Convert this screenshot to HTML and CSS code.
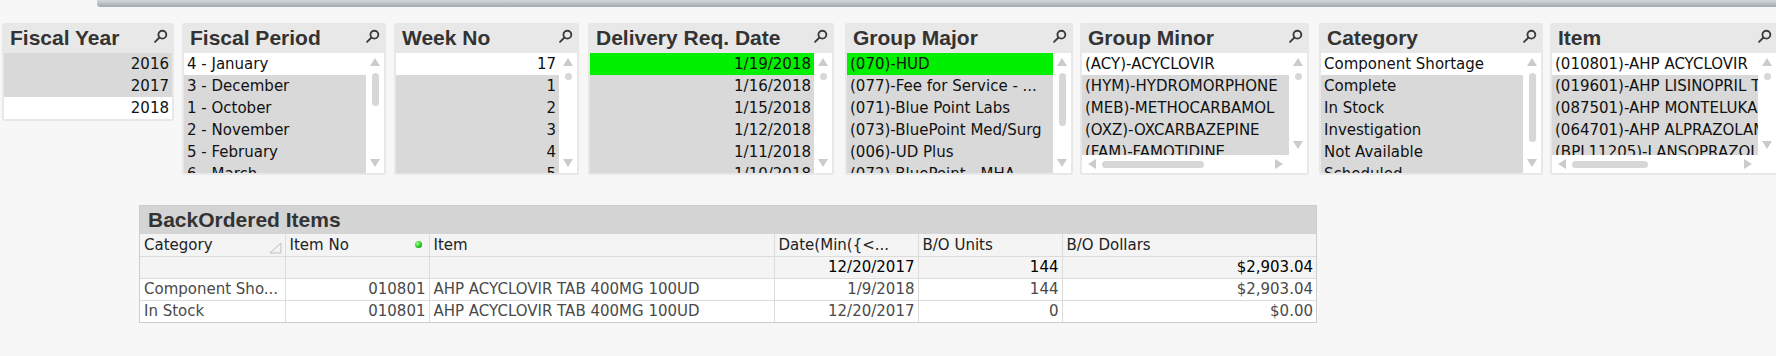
FILE: index.html
```html
<!DOCTYPE html>
<html lang="en">
<head>
    <meta charset="UTF-8">
    <title>BackOrdered Items</title>
    <link rel="stylesheet" href="styles.css">
</head>
<body>
    <div class="tabs"></div>

    <div class="filters">
        <div class="lb lb-year">
            <div class="lb-head">
                <span class="lb-title">Fiscal Year</span>
                <svg class="lb-search" viewBox="0 0 16 16"><circle cx="10" cy="6" r="4.2"/><line x1="6.9" y1="9.1" x2="2.2" y2="13.8"/></svg>
            </div>
            <div class="lb-body">
                <div class="lb-rows num">
                    <div class="row x">2016</div>
                    <div class="row x">2017</div>
                    <div class="row">2018</div>
                </div>
            </div>
        </div>

        <div class="lb lb-period">
            <div class="lb-head">
                <span class="lb-title">Fiscal Period</span>
                <svg class="lb-search" viewBox="0 0 16 16"><circle cx="10" cy="6" r="4.2"/><line x1="6.9" y1="9.1" x2="2.2" y2="13.8"/></svg>
            </div>
            <div class="lb-body">
                <div class="lb-rows">
                    <div class="row">4 - January</div>
                    <div class="row x">3 - December</div>
                    <div class="row x">1 - October</div>
                    <div class="row x">2 - November</div>
                    <div class="row x">5 - February</div>
                    <div class="row x">6 - March</div>
                </div>
                <div class="vscroll">
                    <span class="arr up"></span>
                    <span class="thumb" style="height:33px"></span>
                    <span class="arr down"></span>
                </div>
            </div>
        </div>

        <div class="lb lb-week">
            <div class="lb-head">
                <span class="lb-title">Week No</span>
                <svg class="lb-search" viewBox="0 0 16 16"><circle cx="10" cy="6" r="4.2"/><line x1="6.9" y1="9.1" x2="2.2" y2="13.8"/></svg>
            </div>
            <div class="lb-body">
                <div class="lb-rows num">
                    <div class="row">17</div>
                    <div class="row x">1</div>
                    <div class="row x">2</div>
                    <div class="row x">3</div>
                    <div class="row x">4</div>
                    <div class="row x">5</div>
                </div>
                <div class="vscroll">
                    <span class="arr up"></span>
                    <span class="dot"></span>
                    <span class="arr down"></span>
                </div>
            </div>
        </div>

        <div class="lb lb-date">
            <div class="lb-head">
                <span class="lb-title">Delivery Req. Date</span>
                <svg class="lb-search" viewBox="0 0 16 16"><circle cx="10" cy="6" r="4.2"/><line x1="6.9" y1="9.1" x2="2.2" y2="13.8"/></svg>
            </div>
            <div class="lb-body">
                <div class="lb-rows num">
                    <div class="row s">1/19/2018</div>
                    <div class="row x">1/16/2018</div>
                    <div class="row x">1/15/2018</div>
                    <div class="row x">1/12/2018</div>
                    <div class="row x">1/11/2018</div>
                    <div class="row x">1/10/2018</div>
                </div>
                <div class="vscroll">
                    <span class="arr up"></span>
                    <span class="dot"></span>
                    <span class="arr down"></span>
                </div>
            </div>
        </div>

        <div class="lb lb-major">
            <div class="lb-head">
                <span class="lb-title">Group Major</span>
                <svg class="lb-search" viewBox="0 0 16 16"><circle cx="10" cy="6" r="4.2"/><line x1="6.9" y1="9.1" x2="2.2" y2="13.8"/></svg>
            </div>
            <div class="lb-body">
                <div class="lb-rows">
                    <div class="row s">(070)-HUD</div>
                    <div class="row x">(077)-Fee for Service - ...</div>
                    <div class="row x">(071)-Blue Point Labs</div>
                    <div class="row x">(073)-BluePoint Med/Surg</div>
                    <div class="row x">(006)-UD Plus</div>
                    <div class="row x">(072)-BluePoint - MHA</div>
                </div>
                <div class="vscroll">
                    <span class="arr up"></span>
                    <span class="thumb" style="height:53px"></span>
                    <span class="arr down"></span>
                </div>
            </div>
        </div>

        <div class="lb lb-minor">
            <div class="lb-head">
                <span class="lb-title">Group Minor</span>
                <svg class="lb-search" viewBox="0 0 16 16"><circle cx="10" cy="6" r="4.2"/><line x1="6.9" y1="9.1" x2="2.2" y2="13.8"/></svg>
            </div>
            <div class="lb-body hs">
                <div class="lb-rows">
                    <div class="row">(ACY)-ACYCLOVIR</div>
                    <div class="row x">(HYM)-HYDROMORPHONE</div>
                    <div class="row x">(MEB)-METHOCARBAMOL</div>
                    <div class="row x">(OXZ)-OXCARBAZEPINE</div>
                    <div class="row x">(FAM)-FAMOTIDINE</div>
                </div>
                <div class="vscroll">
                    <span class="arr up"></span>
                    <span class="dot"></span>
                    <span class="arr down"></span>
                </div>
                <div class="hscroll">
                    <span class="arr left"></span>
                    <span class="hthumb" style="width:102px"></span>
                    <span class="arr right"></span>
                </div>
            </div>
        </div>

        <div class="lb lb-cat">
            <div class="lb-head">
                <span class="lb-title">Category</span>
                <svg class="lb-search" viewBox="0 0 16 16"><circle cx="10" cy="6" r="4.2"/><line x1="6.9" y1="9.1" x2="2.2" y2="13.8"/></svg>
            </div>
            <div class="lb-body">
                <div class="lb-rows">
                    <div class="row">Component Shortage</div>
                    <div class="row x">Complete</div>
                    <div class="row x">In Stock</div>
                    <div class="row x">Investigation</div>
                    <div class="row x">Not Available</div>
                    <div class="row x">Scheduled</div>
                </div>
                <div class="vscroll">
                    <span class="arr up"></span>
                    <span class="thumb" style="height:69px"></span>
                    <span class="arr down"></span>
                </div>
            </div>
        </div>

        <div class="lb lb-item">
            <div class="lb-head">
                <span class="lb-title">Item</span>
                <svg class="lb-search" viewBox="0 0 16 16"><circle cx="10" cy="6" r="4.2"/><line x1="6.9" y1="9.1" x2="2.2" y2="13.8"/></svg>
            </div>
            <div class="lb-body hs">
                <div class="lb-rows">
                    <div class="row">(010801)-AHP ACYCLOVIR</div>
                    <div class="row x">(019601)-AHP LISINOPRIL TAB</div>
                    <div class="row x">(087501)-AHP MONTELUKAST</div>
                    <div class="row x">(064701)-AHP ALPRAZOLAM</div>
                    <div class="row x">(BPL11205)-LANSOPRAZOLE</div>
                </div>
                <div class="vscroll">
                    <span class="arr up"></span>
                    <span class="dot"></span>
                    <span class="arr down"></span>
                </div>
                <div class="hscroll">
                    <span class="arr left"></span>
                    <span class="hthumb" style="width:76px"></span>
                    <span class="arr right"></span>
                </div>
            </div>
        </div>
    </div>

    <div class="straight">
        <div class="st-title">BackOrdered Items</div>
        <table class="st-table">
            <colgroup>
                <col style="width:145px">
                <col style="width:144px">
                <col style="width:345px">
                <col style="width:144px">
                <col style="width:144px">
                <col style="width:254px">
            </colgroup>
            <tr class="st-head">
                <td><div class="cell-flex">Category<svg class="sort" viewBox="0 0 13 12"><polygon points="1,11 12,11 12,1"/></svg></div></td>
                <td><div class="cell-flex">Item No<span class="dot-green"></span></div></td>
                <td>Item</td>
                <td>Date(Min({&lt;...</td>
                <td>B/O Units</td>
                <td>B/O Dollars</td>
            </tr>
            <tr class="st-total">
                <td></td>
                <td></td>
                <td></td>
                <td class="r">12/20/2017</td>
                <td class="r">144</td>
                <td class="r">$2,903.04</td>
            </tr>
            <tr>
                <td>Component Sho...</td>
                <td class="r">010801</td>
                <td>AHP ACYCLOVIR TAB 400MG 100UD</td>
                <td class="r">1/9/2018</td>
                <td class="r">144</td>
                <td class="r">$2,903.04</td>
            </tr>
            <tr>
                <td>In Stock</td>
                <td class="r">010801</td>
                <td>AHP ACYCLOVIR TAB 400MG 100UD</td>
                <td class="r">12/20/2017</td>
                <td class="r">0</td>
                <td class="r">$0.00</td>
            </tr>
        </table>
    </div>
</body>
</html>
```

FILE: styles.css
```css
* {
    box-sizing: border-box;
}

body {
    margin: 0;
    width: 1776px;
    height: 356px;
    overflow: hidden;
    background: #f7f7f7;
    font-family: "DejaVu Sans", Verdana, sans-serif;
    color: #111;
}

/* sheet tab strip at top */
.tabs {
    margin-left: 97px;
    height: 7px;
    background: linear-gradient(#d2d8db, #a2a9ad);
    border-bottom-left-radius: 3px;
}

.filters {
    display: flex;
    align-items: flex-start;
    margin-top: 16px;
}

/* list boxes */
.lb {
    flex: none;
    background: #e8e8e8;
    padding: 0 2px 2px;
    border-radius: 2px;
}

.lb-year   { width: 172px; margin-left: 2px; }
.lb-period { width: 204px; margin-left: 8px; }
.lb-week   { width: 185px; margin-left: 8px; }
.lb-date   { width: 246px; margin-left: 9px; }
.lb-major  { width: 228px; margin-left: 11px; }
.lb-minor  { width: 229px; margin-left: 7px; }
.lb-cat    { width: 224px; margin-left: 10px; }
.lb-item   { width: 228px; margin-left: 7px; }

.lb-head {
    height: 30px;
    display: flex;
    justify-content: space-between;
    padding: 0 4px 0 6px;
}

.lb-title {
    font: bold 21px/30px "Liberation Sans", Arial, sans-serif;
    color: #333;
}

.lb-search {
    width: 15px;
    height: 15px;
    margin-top: 6px;
    fill: none;
    stroke: #3c3c3c;
    stroke-width: 2;
    stroke-linecap: round;
}

.lb-body {
    height: 120px;
    background: #fff;
    display: flex;
    overflow: hidden;
}

.lb-year .lb-body {
    height: 66px;
}

.lb-body.hs {
    display: grid;
    grid-template-columns: 1fr 18px;
    grid-template-rows: 102px 18px;
}

.lb-rows {
    flex: 1;
    min-width: 0;
    overflow: hidden;
}

.row {
    height: 22px;
    line-height: 22px;
    font-size: 15px;
    padding: 0 3px;
    white-space: nowrap;
    overflow: hidden;
}

.row.x {
    background: #d9d9d9;
}

.row.s {
    background: #00f000;
}

.num .row {
    text-align: right;
    padding-right: 3px;
}

/* scrollbars */
.vscroll {
    width: 18px;
    flex: none;
    display: flex;
    flex-direction: column;
    align-items: center;
    padding: 5px 0 6px;
}

.hscroll {
    display: flex;
    align-items: center;
    padding: 0 6px;
}

.arr {
    width: 0;
    height: 0;
    border: 5px solid transparent;
}

.arr.up {
    border-top: 0;
    border-bottom: 8px solid #cbcbcb;
}

.arr.down {
    border-bottom: 0;
    border-top: 8px solid #cbcbcb;
    margin-top: auto;
}

.arr.left {
    border-left: 0;
    border-right: 8px solid #cbcbcb;
}

.arr.right {
    border-right: 0;
    border-left: 8px solid #cbcbcb;
    margin-left: auto;
}

.thumb {
    width: 7px;
    margin-top: 7px;
    background: #d7d7d7;
    border-radius: 4px;
}

.hthumb {
    height: 7px;
    margin-left: 6px;
    background: #d7d7d7;
    border-radius: 4px;
}

.dot {
    width: 7px;
    height: 7px;
    margin-top: 7px;
    background: #d7d7d7;
    border-radius: 50%;
}

/* straight table */
.straight {
    margin: 30px 0 0 139px;
    width: 1178px;
    background: #fff;
    border: 1px solid #cdcdcd;
}

.st-title {
    height: 28px;
    padding-left: 8px;
    background: #d4d4d4;
    font: bold 21px/28px "Liberation Sans", Arial, sans-serif;
    color: #333;
}

.st-table {
    width: 100%;
    border-collapse: collapse;
    table-layout: fixed;
}

.st-table tr {
    height: 22px;
}

.st-table td {
    padding: 0 3px 0 4px;
    border: 1px solid #dcdcdc;
    font-size: 15px;
    color: #4a4a4a;
    white-space: nowrap;
    overflow: hidden;
}

.st-table tr:first-child td {
    border-top: 0;
}

.st-table tr td:first-child {
    border-left: 0;
}

.st-table tr td:last-child {
    border-right: 0;
}

.st-table tr:last-child td {
    border-bottom: 0;
}

.st-head td,
.st-total td {
    background: #f4f4f4;
    color: #222;
}

.st-total td {
    color: #000;
}

.st-table td.r {
    text-align: right;
}

.cell-flex {
    display: flex;
    align-items: center;
    justify-content: space-between;
}

.sort {
    width: 13px;
    height: 12px;
    margin-top: 6px;
    fill: none;
    stroke: #bdbdbd;
    stroke-width: 1;
}

.dot-green {
    width: 7px;
    height: 7px;
    margin-right: 4px;
    border-radius: 50%;
    background: radial-gradient(circle at 35% 35%, #a6ff9c, #22c81a 55%, #0a7d06);
}
```
